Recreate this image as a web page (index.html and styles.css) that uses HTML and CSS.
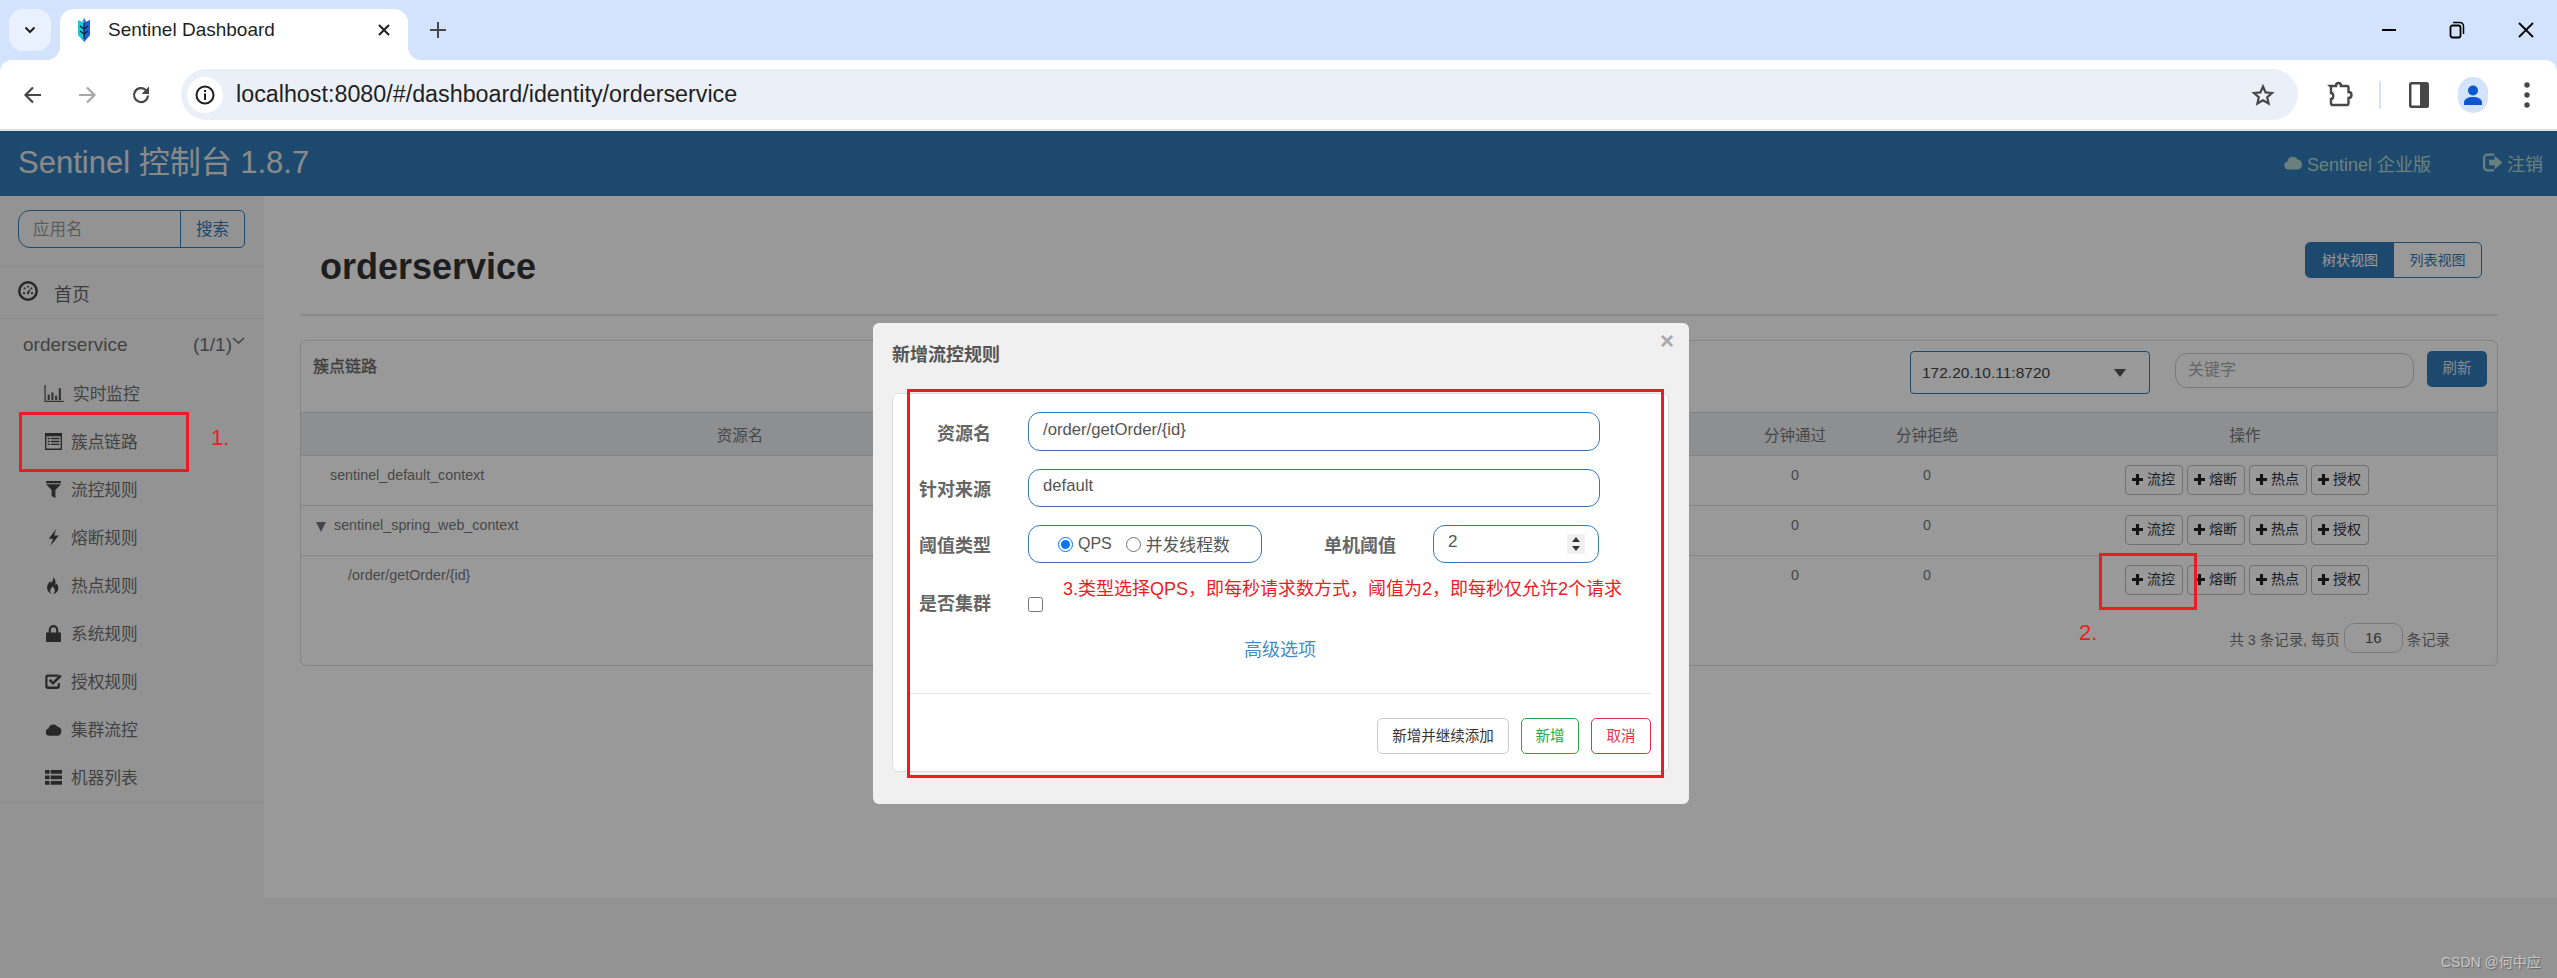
FILE: index.html
```html
<!DOCTYPE html>
<html lang="zh-CN">
<head>
<meta charset="utf-8">
<title>Sentinel Dashboard</title>
<link rel="stylesheet" href="styles.css">
</head>
<body>
<svg class="sprite" aria-hidden="true">
  <defs>
    <symbol id="i-dash" viewBox="0 0 16 16"><path fill-rule="evenodd" d="M8 0a8 8 0 1 0 0 16A8 8 0 0 0 8 0zm0 2a6 6 0 1 1 0 12A6 6 0 0 1 8 2z"/><path d="M4 9h1.6v1.4H4zM10.4 9H12v1.4h-1.6zM4.6 5.2h1.4v1.4H4.600zM7.300 3.800h1.400v1.400H7.300zM10 5.200h1.400v1.400H10zM7 9.500l2.200-3 .8.500-1.400 3.300a1.100 1.100 0 0 1-1.600-.800z"/></symbol>
    <symbol id="i-stats" viewBox="0 0 18 16"><path d="M0 0h1.200v14.800H18V16H0zM3 9h2v5H3zM6.500 7h2v7h-2zM10 10h2v4h-2zM13.500 3h2v11h-2z"/></symbol>
    <symbol id="i-list" viewBox="0 0 16 16"><path fill-rule="evenodd" d="M0 0h16v16H0zM1.300 3v11.700h13.400V3z"/><path d="M2.500 4.500h2v1.300h-2zM5.500 4.500h8v1.300h-8zM2.500 7.300h2v1.300h-2zM5.500 7.300h8v1.300h-8zM2.500 10.100h2v1.300h-2zM5.500 10.100h8v1.300h-8z"/></symbol>
    <symbol id="i-filter" viewBox="0 0 16 16"><path d="M1 0h14v2H1zM1 3h14L9.800 8.500V16l-3.600-2V8.500z"/></symbol>
    <symbol id="i-flash" viewBox="0 0 16 16"><path d="M10.500 0L3.500 9.200h4.100L5 16l8-10H8.600z"/></symbol>
    <symbol id="i-fire" viewBox="0 0 16 16"><path d="M7.500 0c1 2.600-.5 3.800-1.800 5.600C5.300 4.900 5 4.500 4.700 4 2.800 6 1.500 8.300 2 11c.4 2.400 2.200 4.200 4.300 5-1.300-1.100-1.800-2.600-1.300-4 .4-1.200 1.500-2 2-3.400 1 .8 2.600 3 2.300 4.600-.2.900-.7 1.900-1.500 2.800 2.400-.5 4.400-2.400 4.700-5 .3-2.100-.6-3.800-1.600-5.200-.1.800-.4 1.400-1 1.900C10.200 4.600 9.900 1.700 7.500 0z"/></symbol>
    <symbol id="i-lock" viewBox="0 0 16 16"><path fill-rule="evenodd" d="M3.500 7V4.500a4.500 4.500 0 0 1 9 0V7H15v9H1V7zM5.500 7h5V4.500a2.500 2.500 0 0 0-5 0z"/></symbol>
    <symbol id="i-check" viewBox="0 0 16 16"><path d="M3 1.500h9.500v2H3.300a1 1 0 0 0-1 1v7.200a1 1 0 0 0 1 1h7.700a1 1 0 0 0 1-1V9.500h2v3A2.500 2.500 0 0 1 11.500 15h-8.700A2.500 2.500 0 0 1 .3 12.500V4A2.500 2.500 0 0 1 3 1.500z"/><path d="M7.500 11.200L3.600 7.400l1.700-1.700 2.200 2.200L14 1.500l1.700 1.700z"/></symbol>
    <symbol id="i-cloud" viewBox="0 0 18 14"><path d="M4.500 13.500A3.800 3.800 0 0 1 3.800 6a5.200 5.200 0 0 1 9.600-1.800A4.800 4.800 0 0 1 14 13.500z"/></symbol>
    <symbol id="i-th" viewBox="0 0 17 15"><path d="M0 0h4.500v3.800H0zM5.700 0H17v3.800H5.700zM0 5.500h4.500v3.800H0zM5.700 5.500H17v3.800H5.700zM0 11h4.500v3.800H0zM5.700 11H17v3.800H5.700z"/></symbol>
    <symbol id="i-out" viewBox="0 0 18 16"><path d="M4 0h6v2H4a2 2 0 0 0-2 2v8a2 2 0 0 0 2 2h6v2H4a4 4 0 0 1-4-4V4a4 4 0 0 1 4-4z"/><path d="M5.500 5.500h5V2l7 6-7 6v-3.500h-5z"/></symbol>
    <symbol id="i-plus" viewBox="0 0 12 12"><path d="M4.300 0h3.400v4.300H12v3.400H7.700V12H4.300V7.700H0V4.300h4.300z"/></symbol>
  </defs>
</svg>

<div class="tabstrip">
  <button class="tab-menu" type="button"><svg width="14" height="14" viewBox="0 0 14 14"><path d="M2.500 4.500L7 9l4.500-4.500" fill="none" stroke="#1f1f1f" stroke-width="2"/></svg></button>
  <div class="tab">
    <svg class="favicon" width="16" height="24" viewBox="0 0 16 24"><path d="M8 0l2 4 4-2v15l-6 7-6-7V2l4 2z" fill="#1fc7d4"/><path d="M8 0l2 4 4-2v15l-6 7z" fill="#1e5fd6"/><path d="M8 5v16M4 8l4 3 4-3M4 13l4 3 4-3" fill="none" stroke="#10253f" stroke-width="1.300"/></svg>
    <span class="tab-title">Sentinel Dashboard</span>
    <svg class="tab-close" width="14" height="14" viewBox="0 0 14 14"><path d="M2 2l10 10M12 2L2 12" stroke="#1f1f1f" stroke-width="2"/></svg>
  </div>
  <svg class="new-tab" width="18" height="18" viewBox="0 0 18 18"><path d="M9 1v16M1 9h16" stroke="#474747" stroke-width="2"/></svg>
  <div class="window-controls">
    <svg width="16" height="16" viewBox="0 0 16 16"><path d="M1 8h14" stroke="#000" stroke-width="2"/></svg>
    <svg width="16" height="18" viewBox="0 0 16 18"><rect x="1.500" y="4.500" width="10" height="12" rx="2" fill="none" stroke="#000" stroke-width="1.800"/><path d="M4 1.500h7a3.500 3.500 0 0 1 3.500 3.500v8" fill="none" stroke="#000" stroke-width="1.500"/></svg>
    <svg width="18" height="18" viewBox="0 0 18 18"><path d="M2 2l14 14M16 2L2 16" stroke="#000" stroke-width="1.800"/></svg>
  </div>
</div>

<div class="toolbar">
  <svg class="nav-btn" width="20" height="20" viewBox="0 0 20 20"><path d="M18 10H3M10 2.500L2.500 10l7.500 7.500" fill="none" stroke="#474747" stroke-width="2.200"/></svg>
  <svg class="nav-btn" width="20" height="20" viewBox="0 0 20 20"><path d="M2 10h15M10 2.500l7.500 7.500-7.500 7.500" fill="none" stroke="#a8a8a8" stroke-width="2.200"/></svg>
  <svg class="nav-btn" width="20" height="20" viewBox="0 0 20 20"><path d="M17 10.500A7 7 0 1 1 14.800 5L17 7.200" fill="none" stroke="#474747" stroke-width="2.200"/><path d="M18 1.500V9h-7.500z" fill="#474747"/></svg>
  <div class="omnibox">
    <span class="site-info"><svg width="20" height="20" viewBox="0 0 20 20"><circle cx="10" cy="10" r="8.500" fill="none" stroke="#1f1f1f" stroke-width="2"/><path d="M9 8.500h2V15H9zM9 5h2v2H9z" fill="#1f1f1f"/></svg></span>
    <span class="url">localhost:8080/#/dashboard/identity/orderservice</span>
    <svg class="star" width="24" height="24" viewBox="0 0 24 24"><path d="M12 3.500l2.600 5.900 6.400.6-4.800 4.200 1.400 6.300-5.600-3.300-5.600 3.300 1.400-6.300L3 10l6.400-.6z" fill="none" stroke="#474747" stroke-width="2.200"/></svg>
  </div>
  <svg class="tool-ext" width="26" height="30" viewBox="0 0 26 30"><path d="M3 6h6c0-4 5-4 5 0h6a1.500 1.500 0 0 1 1.500 1.500V12c4 0 4 6 0 6v5.500A1.500 1.500 0 0 1 20 25H5l-1-1v-5c3 0 3-6 0-6V7z" fill="none" stroke="#474747" stroke-width="2.400"/></svg>
  <span class="tool-sep"></span>
  <svg class="tool-panel" width="22" height="28" viewBox="0 0 22 28"><rect x="1" y="1" width="20" height="26" rx="2.500" fill="#474747"/><rect x="3.500" y="3.500" width="8.500" height="21" fill="#fff"/></svg>
  <span class="avatar"><svg width="20" height="22" viewBox="0 0 20 22"><circle cx="10" cy="6.500" r="5" fill="#0b57d0"/><path d="M1 21v-2.500C1 15 5 13 10 13s9 2 9 5.500V21z" fill="#0b57d0"/></svg></span>
  <svg class="tool-menu" width="6" height="28" viewBox="0 0 6 28"><circle cx="3" cy="4" r="2.700" fill="#474747"/><circle cx="3" cy="14" r="2.700" fill="#474747"/><circle cx="3" cy="24" r="2.700" fill="#474747"/></svg>
</div>

<div class="app">
  <header class="app-header">
    <span class="brand">Sentinel 控制台 1.8.7</span>
    <span class="head-link"><svg class="ic-cloud-head"><use href="#i-cloud"/></svg>Sentinel 企业版</span>
    <span class="head-link head-logout"><svg class="ic-out"><use href="#i-out"/></svg>注销</span>
  </header>

  <div class="app-body">
    <aside class="sidebar">
      <div class="search">
        <span class="search-input">应用名</span>
        <span class="search-btn">搜索</span>
      </div>
      <div class="home-row"><svg class="ic-home"><use href="#i-dash"/></svg>首页</div>
      <div class="nav-section">
        <div class="app-row"><span>orderservice</span><span class="app-count">(1/1)<svg width="13" height="8" viewBox="0 0 13 8"><path d="M1 1l5.500 5L12 1" fill="none" stroke="#666" stroke-width="1.400"/></svg></span></div>
        <div class="nav-item nav-wide"><svg class="ic-stats"><use href="#i-stats"/></svg>实时监控</div>
        <div class="nav-item"><svg class="ic-side"><use href="#i-list"/></svg>簇点链路</div>
        <div class="nav-item"><svg class="ic-side"><use href="#i-filter"/></svg>流控规则</div>
        <div class="nav-item"><svg class="ic-side"><use href="#i-flash"/></svg>熔断规则</div>
        <div class="nav-item"><svg class="ic-side"><use href="#i-fire"/></svg>热点规则</div>
        <div class="nav-item"><svg class="ic-side"><use href="#i-lock"/></svg>系统规则</div>
        <div class="nav-item"><svg class="ic-side"><use href="#i-check"/></svg>授权规则</div>
        <div class="nav-item"><svg class="ic-side"><use href="#i-cloud"/></svg>集群流控</div>
        <div class="nav-item"><svg class="ic-side"><use href="#i-th"/></svg>机器列表</div>
      </div>
    </aside>

    <main class="main">
      <div class="page-head">
        <h1>orderservice</h1>
        <div class="view-toggle">
          <span class="view-btn view-on">树状视图</span>
          <span class="view-btn">列表视图</span>
        </div>
      </div>

      <section class="panel">
        <div class="panel-head">
          <span class="panel-title">簇点链路</span>
          <div class="panel-tools">
            <div class="machine-select"><span>172.20.10.11:8720</span><i class="caret"></i></div>
            <span class="keyword">关键字</span>
            <span class="refresh">刷新</span>
          </div>
        </div>
        <table class="grid">
          <colgroup>
            <col class="c-name"><col class="c-num"><col class="c-num"><col class="c-num"><col class="c-num"><col class="c-min"><col class="c-min"><col>
          </colgroup>
          <thead>
            <tr><th>资源名</th><th>通过QPS</th><th>限流QPS</th><th>线程数</th><th>平均RT</th><th>分钟通过</th><th>分钟拒绝</th><th>操作</th></tr>
          </thead>
          <tbody>
            <tr>
              <td class="name lvl0">sentinel_default_context</td><td>0</td><td>0</td><td>0</td><td>0</td><td>0</td><td>0</td>
              <td><div class="ops">
                <span class="op"><svg class="ic-plus"><use href="#i-plus"/></svg>流控</span><span class="op"><svg class="ic-plus"><use href="#i-plus"/></svg>熔断</span><span class="op"><svg class="ic-plus"><use href="#i-plus"/></svg>热点</span><span class="op"><svg class="ic-plus"><use href="#i-plus"/></svg>授权</span>
              </div></td>
            </tr>
            <tr>
              <td class="name lvl1"><i class="tree-caret"></i>sentinel_spring_web_context</td><td>0</td><td>0</td><td>0</td><td>0</td><td>0</td><td>0</td>
              <td><div class="ops">
                <span class="op"><svg class="ic-plus"><use href="#i-plus"/></svg>流控</span><span class="op"><svg class="ic-plus"><use href="#i-plus"/></svg>熔断</span><span class="op"><svg class="ic-plus"><use href="#i-plus"/></svg>热点</span><span class="op"><svg class="ic-plus"><use href="#i-plus"/></svg>授权</span>
              </div></td>
            </tr>
            <tr class="last">
              <td class="name lvl2">/order/getOrder/{id}</td><td>0</td><td>0</td><td>0</td><td>0</td><td>0</td><td>0</td>
              <td><div class="ops">
                <span class="op"><svg class="ic-plus"><use href="#i-plus"/></svg>流控</span><span class="op"><svg class="ic-plus"><use href="#i-plus"/></svg>熔断</span><span class="op"><svg class="ic-plus"><use href="#i-plus"/></svg>热点</span><span class="op"><svg class="ic-plus"><use href="#i-plus"/></svg>授权</span>
              </div></td>
            </tr>
          </tbody>
        </table>
        <div class="pager">共 3 条记录, 每页<span class="page-size">16</span>条记录</div>
      </section>
    </main>
  </div>

  <div class="backdrop">
    <div class="modal">
      <div class="modal-head">
        <span class="modal-title">新增流控规则</span>
        <span class="modal-close">×</span>
      </div>
      <div class="modal-card">
        <div class="form-row">
          <label class="form-label">资源名</label>
          <input class="field" type="text" value="/order/getOrder/{id}">
        </div>
        <div class="form-row">
          <label class="form-label">针对来源</label>
          <input class="field" type="text" value="default">
        </div>
        <div class="form-row">
          <label class="form-label">阈值类型</label>
          <div class="radio-box">
            <label class="radio"><input type="radio" name="grade" checked>QPS</label>
            <label class="radio"><input type="radio" name="grade"><span class="radio-wide">并发线程数</span></label>
          </div>
          <label class="form-label form-label-inline">单机阈值</label>
          <div class="number-box"><span>2</span>
            <span class="spin"><svg width="10" height="16" viewBox="0 0 10 16"><path d="M5 1l4 5H1zM5 15L1 10h8z" fill="#333"/></svg></span>
          </div>
        </div>
        <div class="form-row">
          <label class="form-label label-low">是否集群</label>
          <input class="cluster-check" type="checkbox">
        </div>
        <div class="advanced">高级选项</div>
        <div class="modal-foot">
          <span class="foot-btn">新增并继续添加</span>
          <span class="foot-btn foot-ok">新增</span>
          <span class="foot-btn foot-cancel">取消</span>
        </div>
      </div>
    </div>
  </div>

  <span class="mark mark-1"></span>
  <span class="mark mark-2"></span>
  <span class="mark mark-3"></span>
  <span class="note note-1">1.</span>
  <span class="note note-2">2.</span>
  <span class="note note-3">3.类型选择QPS，即每秒请求数方式，阈值为2，即每秒仅允许2个请求</span>
  <span class="watermark">CSDN @何中应</span>
</div>
</body>
</html>
```
FILE: styles.css
```css
* { box-sizing: border-box; }
html, body { margin: 0; padding: 0; }
body {
  width: 2557px;
  height: 978px;
  overflow: hidden;
  background: #d3e3fd;
  font-family: "Liberation Sans", "Noto Sans CJK SC", sans-serif;
  color: #777;
  position: relative;
}
.sprite { position: absolute; width: 0; height: 0; }
svg { display: block; flex: none; }

/* browser chrome */
.tabstrip { height: 60px; padding-top: 9px; display: flex; align-items: flex-start; }
.tab-menu {
  width: 42px; height: 42px; margin-left: 9px; border: 0; border-radius: 14px; background: #e9f1fe;
  display: flex; align-items: center; justify-content: center; padding: 0;
}
.tab {
  width: 348px; height: 51px; margin-left: 9px; background: #fff; border-radius: 14px 14px 0 0;
  display: flex; align-items: center; padding: 0 17px 9px 16px; position: relative;
}
.tab::before, .tab::after {
  content: ""; position: absolute; bottom: 0; width: 14px; height: 14px;
}
.tab::before { left: -14px; background: radial-gradient(circle at 0 0, #d3e3fd 14px, #fff 14.5px); }
.tab::after { right: -14px; background: radial-gradient(circle at 100% 0, #d3e3fd 14px, #fff 14.5px); }
.tab-title { margin-left: 16px; font-size: 19px; color: #1f1f1f; flex: 1; white-space: nowrap; }
.new-tab { margin: 12px 0 0 21px; }
.window-controls { margin-left: auto; display: flex; align-items: center; height: 42px; gap: 52px; padding-right: 22px; }

.toolbar {
  height: 71px; background: #fff; border-bottom: 2px solid #e0e0e0; border-radius: 12px 12px 0 0;
  display: flex; align-items: center; padding-left: 23px;
}
.nav-btn { margin-right: 34px; }
.omnibox {
  width: 2117px; height: 51px; margin-left: -4px; border-radius: 26px; background: #ebeff8;
  display: flex; align-items: center; padding: 0 23px 0 6px;
}
.site-info {
  width: 36px; height: 36px; border-radius: 18px; background: #fff;
  display: flex; align-items: center; justify-content: center;
}
.url { margin-left: 13px; font-size: 23.300px; color: #1f1f1f; flex: 1; white-space: nowrap; }
.tool-ext { margin-left: 29px; }
.tool-sep { width: 2px; height: 28px; margin-left: 26px; background: #d3e3fd; }
.tool-panel { margin-left: 27px; }
.avatar {
  width: 30px; height: 36px; margin-left: 28px; border-radius: 15px; background: #d3e3fd;
  display: flex; align-items: center; justify-content: center;
}
.tool-menu { margin-left: 36px; }

/* application */
.app { height: 847px; background: #f6f6f6; }
.app-header { height: 65px; background: #337ab7; display: flex; align-items: center; padding: 0 14px 0 18px; color: #b0d8d0; }
.brand { font-size: 31px; color: #e6e6e6; margin-right: auto; position: relative; top: -4px; white-space: nowrap; }
.head-link { font-size: 18px; display: flex; align-items: center; white-space: nowrap; position: relative; top: -1px; }
.head-logout { margin-left: 52px; }
.ic-cloud-head { width: 20px; height: 15px; margin-right: 4px; fill: #b0d8d0; }
.ic-out { width: 20px; height: 19px; margin-right: 4px; fill: #b0d8d0; }

.app-body { display: flex; height: 782px; align-items: flex-start; }
.sidebar { width: 264px; flex: none; padding-top: 14px; font-size: 16.700px; color: #6f6f6f; }
.search { display: flex; width: 227px; height: 38px; margin-left: 18px; border: 1px solid #337ab7; border-radius: 12px 5px 5px 12px; line-height: 36px; font-size: 16.500px; }
.search-input { flex: 1; padding-left: 14px; color: #9a9a9a; border-right: 1px solid #337ab7; }
.search-btn { width: 63px; text-align: center; color: #337ab7; }
.home-row {
  height: 53px; margin-top: 18px; border-top: 1px solid #e8e8e8; border-bottom: 1px solid #e8e8e8;
  display: flex; align-items: center; padding-left: 18px; font-size: 18px; color: #666;
}
.ic-home { width: 20px; height: 20px; margin-right: 16px; fill: #444; position: relative; top: -2px; }
.nav-section { border-bottom: 1px solid #e8e8e8; height: 484px; }
.app-row { height: 50px; display: flex; align-items: center; justify-content: space-between; padding: 2px 19px 0 23px; font-size: 19px; }
.app-count { display: flex; align-items: flex-start; }
.app-count svg { margin-top: 3px; }
.nav-item { height: 48px; display: flex; align-items: center; padding-left: 45px; white-space: nowrap; }
.nav-wide .ic-stats { width: 20px; height: 17px; margin-right: 9px; margin-left: -1px; fill: #555; }
.ic-side { width: 17px; height: 17px; margin-right: 9px; fill: #444; }

.main { flex: 1; height: 702px; background: #fff; padding: 0 59px 0 36px; }
.page-head {
  height: 120px; border-bottom: 2px solid #e4e4e4; display: flex; align-items: flex-start; justify-content: space-between; padding: 0 16px 0 20px;
}
.page-head h1 { margin: 47px 0 0; font-size: 36px; line-height: 48px; font-weight: 700; color: #333; }
.view-toggle { display: flex; margin-top: 46px; height: 36px; border: 1px solid #337ab7; border-radius: 5px; overflow: hidden; }
.view-btn { width: 88px; line-height: 34px; font-size: 14px; text-align: center; color: #337ab7; }
.view-on { background: #337ab7; color: #fff; }
.view-btn + .view-btn { width: 87px; }

.panel { margin-top: 24px; height: 326px; border: 1px solid #ddd; border-radius: 6px; background: #fff; }
.panel-head { height: 72px; display: flex; justify-content: space-between; padding: 10px 10px 0 12px; border-bottom: 1px solid #ddd; }
.panel-title { font-size: 16px; margin-top: 2px; color: #666; -webkit-text-stroke: .3px #666; }
.panel-tools { display: flex; align-items: flex-start; }
.machine-select {
  width: 240px; height: 43px; border: 1px solid #337ab7; border-radius: 4px; display: flex; align-items: center; justify-content: space-between;
  padding: 0 23px 0 11px; font-size: 15.500px; color: #444;
}
.caret { width: 0; height: 0; border-left: 6px solid transparent; border-right: 6px solid transparent; border-top: 8px solid #555; }
.keyword {
  width: 239px; height: 35px; margin: 2px 0 0 25px; border: 1px solid #ccc; border-radius: 12px; padding-left: 12px; font-size: 16px; line-height: 32px; color: #aaa;
}
.refresh { width: 60px; height: 36px; margin-left: 13px; background: #337ab7; border-radius: 5px; color: #dbe6ef; text-align: center; font-size: 14.500px; line-height: 35px; }

.grid { width: 100%; table-layout: fixed; border-collapse: collapse; font-size: 14.300px; color: #777; }
.c-name { width: 878px; }
.c-num { width: 137.500px; }
.c-min { width: 132px; }
.grid th { height: 42px; padding: 0; font-weight: 400; font-size: 15.500px; text-align: center; background: #ebeef2; border-bottom: 1px solid #ddd; color: #777; }
.grid td { height: 50px; padding: 11px 0 0; vertical-align: top; text-align: center; border-bottom: 1px solid #ddd; line-height: 17px; }
.grid tr.last td { border-bottom: 0; }
.grid td.name { text-align: left; white-space: nowrap; }
.lvl0 { padding-left: 29px !important; }
.lvl1 { padding-left: 15px !important; }
.lvl2 { padding-left: 47px !important; }
.tree-caret {
  display: inline-block; width: 0; height: 0; margin-right: 8px; border-left: 5.500px solid transparent; border-right: 5.500px solid transparent; border-top: 10px solid #777;
  position: relative; top: 2px;
}
.ops { display: flex; justify-content: center; gap: 4px; margin-top: -2px; padding-left: 3px; }
.op {
  width: 58px; height: 30px; border: 1px solid #bbb; border-radius: 4px; display: flex; align-items: center; justify-content: center; color: #333; font-size: 14px;
}
.ic-plus { width: 11px; height: 11px; margin-right: 4px; fill: #222; }
.pager { display: flex; justify-content: flex-end; align-items: center; height: 30px; margin-top: 18px; padding-right: 47px; font-size: 14.400px; color: #777; }
.page-size { width: 59px; height: 30px; margin: 0 4px; border: 1px solid #ccc; border-radius: 10px; text-align: center; line-height: 28px; font-size: 15px; color: #555; }

/* dialog */
.backdrop {
  position: absolute; left: 0; right: 0; top: 131px; bottom: 0; background: rgba(0, 0, 0, .4);
  padding: 192px 0 0 873px;
}
.modal { width: 816px; height: 481px; background: #f0f0f0; border-radius: 6px; padding: 0 20px 0 19px; }
.modal-head { height: 70px; display: flex; justify-content: space-between; align-items: flex-start; }
.modal-title { margin-top: 21px; font-size: 18px; line-height: 22px; font-weight: 700; color: #555; }
.modal-close { font-size: 24px; line-height: 24px; margin: 6px -5px 0 0; color: #aaa; font-weight: 700; }
.modal-card { height: 379px; background: #fff; border: 1px solid #ddd; border-radius: 6px; padding-top: 18px; }
.form-row { display: flex; align-items: center; height: 38px; margin-bottom: 18px; }
.form-row:first-child { height: 39px; }
.form-label { width: 98px; margin-right: 37px; text-align: right; font-size: 18px; font-weight: 700; color: #666; }
.label-low { position: relative; top: 2px; }
.field {
  width: 572px; height: 100%; border: 1px solid #337ab7; border-radius: 12px; padding: 0 14px 4px; font: 16.700px "Liberation Sans", sans-serif; color: #555; outline: 0; background: #fff;
}
.radio-box { width: 234px; height: 38px; border: 1px solid #337ab7; border-radius: 12px; display: flex; align-items: center; padding-left: 29px; gap: 14px; }
.radio { display: flex; align-items: center; font-size: 16px; color: #555; white-space: nowrap; }
.radio-wide { font-size: 16.800px; }
.radio input { width: 15px; height: 15px; margin: 0 5px 0 0; }
.form-label-inline { width: auto; margin: 0 37px 0 62px; }
.number-box {
  width: 166px; height: 38px; border: 1px solid #337ab7; border-radius: 12px; display: flex; align-items: center; justify-content: space-between; padding: 0 13px 4px 14px; font-size: 17px; color: #555;
}
.spin { width: 18px; height: 20px; background: #f0f0f0; display: flex; align-items: center; justify-content: center; margin-top: 4px; }
.cluster-check { width: 15px; height: 15px; margin: 8px 0 0 0; }
.advanced { height: 38px; margin-top: -6px; text-align: center; line-height: 38px; font-size: 18px; color: #428bca; padding-right: 1px; }
.modal-foot { margin: 24px 17px 0 14px; padding-top: 24px; border-top: 1px solid #e5e5e5; display: flex; justify-content: flex-end; gap: 12px; }
.foot-btn { width: 132px; height: 36px; border: 1px solid #ccc; border-radius: 5px; font-size: 14.500px; line-height: 34px; text-align: center; color: #333; white-space: nowrap; background: #fff; }
.foot-ok { width: 58px; border-color: #28a745; color: #28a745; }
.foot-cancel { width: 60px; border-color: #dc3545; color: #dc3545; }

/* screenshot annotations */
.mark { position: absolute; border: 3px solid #ed1c24; }
.mark-1 { left: 19px; top: 412px; width: 170px; height: 60px; }
.mark-2 { left: 2099px; top: 553px; width: 98px; height: 57px; }
.mark-3 { left: 907px; top: 389px; width: 757px; height: 389px; }
.note { position: absolute; color: #ed1c24; white-space: nowrap; }
.note-1 { left: 211px; top: 425px; font-size: 22px; }
.note-2 { left: 2079px; top: 620px; font-size: 22px; }
.note-3 { left: 1063px; top: 578px; font-size: 18px; line-height: 22px; }
.watermark { position: absolute; left: 2441px; top: 953px; font-size: 14px; line-height: 18px; color: #c8c8c8; text-shadow: 1px 1px 1px #666; white-space: nowrap; }
```
